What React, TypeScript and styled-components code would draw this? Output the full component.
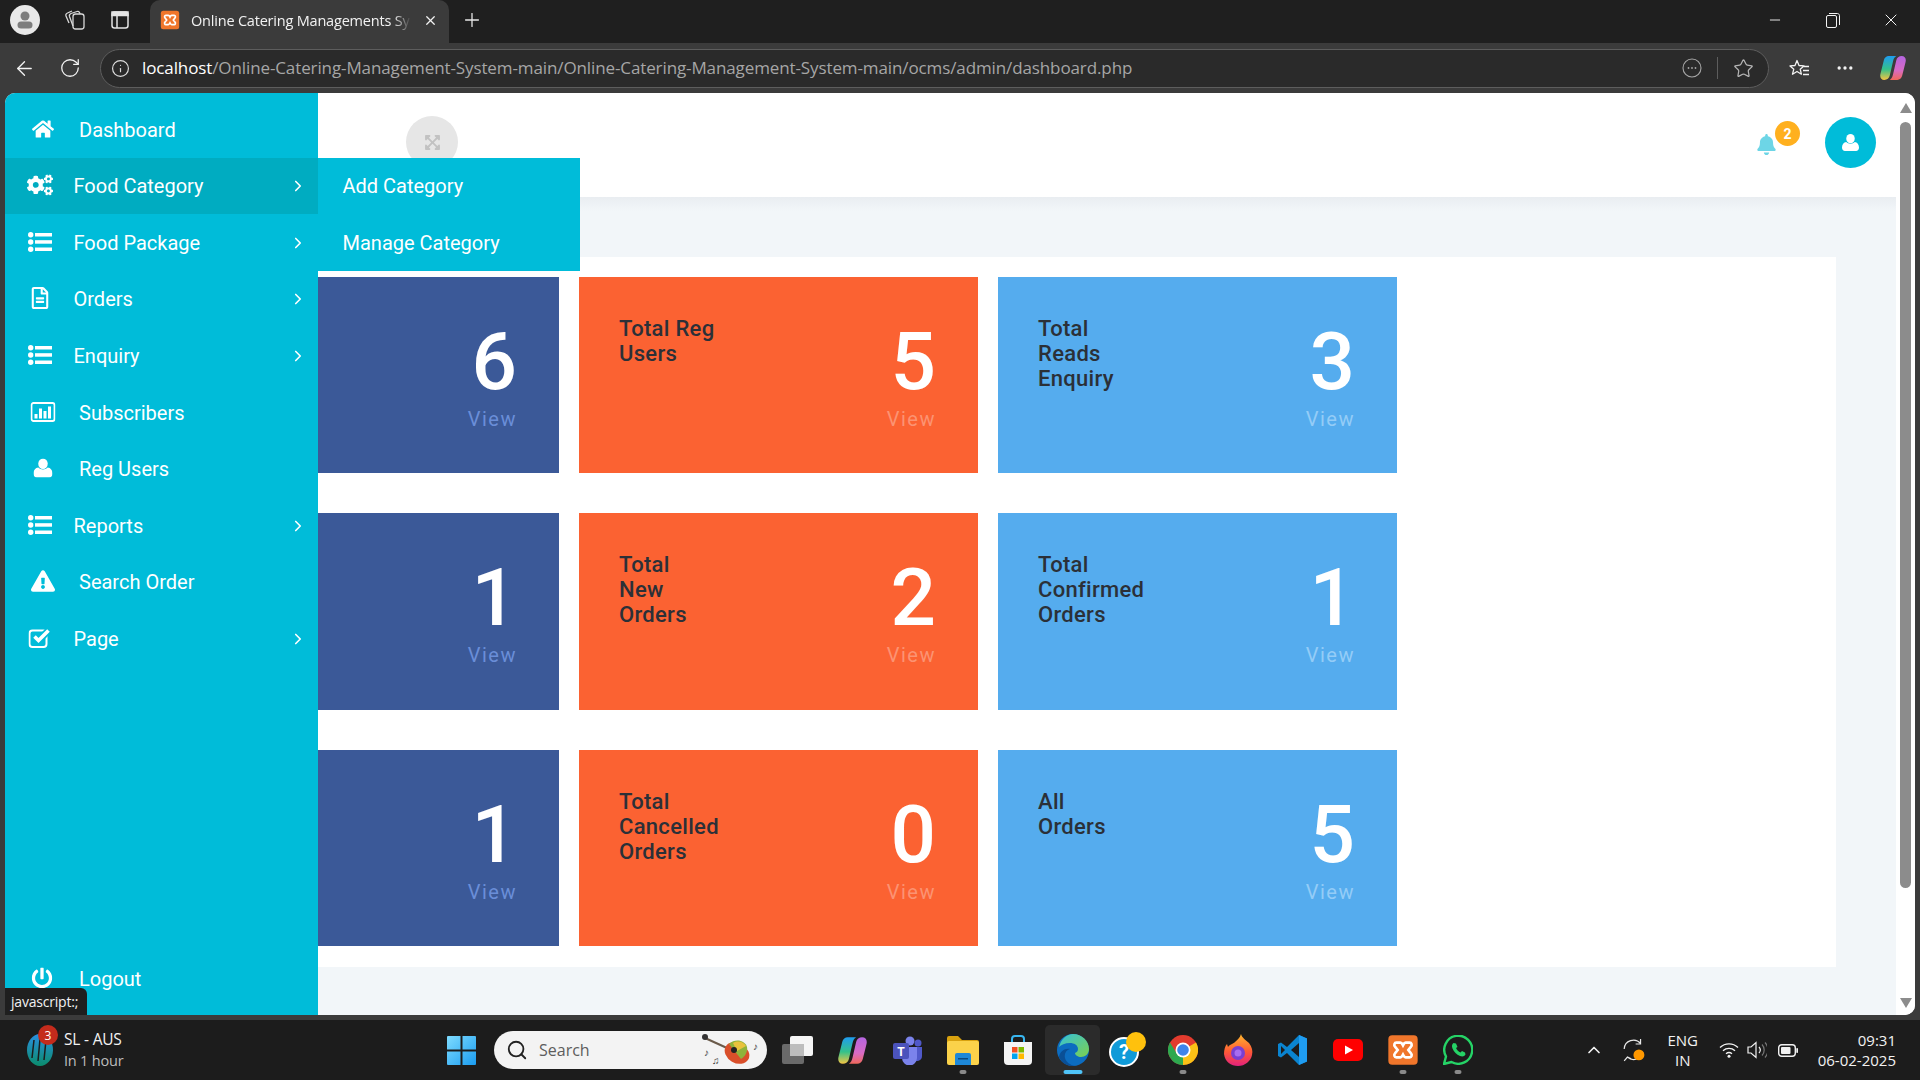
import React from "react"
import styled, {createGlobalStyle} from "styled-components"
import {
  FaBell,
  FaCogs,
  FaExclamationTriangle,
  FaExpandArrowsAlt,
  FaHome,
  FaPowerOff,
  FaRegFileAlt,
} from "react-icons/fa"
import {ChevronRight, ChevronUp, Ellipsis, Info, Minus, Plus, RotateCw, Search, Star, X, ArrowLeft} from "lucide-react"

const GlobalStyle = createGlobalStyle`
  html, body {
    margin: 0;
    padding: 0;
    height: 100%;
    overflow: hidden;
    background: #3b3b3b;
  }
  * {
    box-sizing: border-box;
  }
`

const Screen = styled.div`
  width: 1920px;
  height: 1080px;
  display: flex;
  flex-direction: column;
  background: #3b3b3b;
  font-family: "Open Sans", "Noto Sans", sans-serif;
`

/* browser chrome */

const TabStrip = styled.div`
  height: 43px;
  flex: none;
  padding-bottom: 3px;
  display: flex;
  align-items: center;
  background: #1f1f1f;
  color: #fff;
`

const ChromeSlot = styled.div<{$w: number}>`
  width: ${({$w}) => $w}px;
  flex: none;
  display: flex;
  align-items: center;
  justify-content: center;
`

const CopilotSlot = styled(ChromeSlot)`
  padding-left: 7px;
`

const ProfileDot = styled.div`
  width: 30px;
  height: 30px;
  margin-left: 10px;
  border-radius: 50%;
  background: #e8e8e8;
  display: flex;
  align-items: center;
  justify-content: center;
`

const Tab = styled.div`
  width: 299px;
  height: 43px;
  align-self: flex-start;
  margin-left: 20px;
  padding: 0 0 3px 10px;
  display: flex;
  align-items: center;
  background: #3b3b3b;
  border-radius: 10px 10px 0 0;
`

const TabTitle = styled.div`
  width: 220px;
  flex: none;
  margin-left: 11px;
  white-space: nowrap;
  font-size: 14.5px;
  letter-spacing: -0.2px;
  color: #f2f2f2;
  -webkit-mask-image: linear-gradient(90deg, #000 92%, transparent);
  mask-image: linear-gradient(90deg, #000 92%, transparent);
`

const WindowControls = styled.div`
  margin-left: auto;
  display: flex;
`

const Toolbar = styled.div`
  height: 50px;
  flex: none;
  display: flex;
  align-items: center;
  background: #3b3b3b;
  color: #f2f2f2;
`

const AddressBar = styled.div`
  width: 1669px;
  height: 39px;
  flex: none;
  margin-left: 9px;
  display: flex;
  align-items: center;
  background: #2a2a2a;
  border: 1px solid #5d5d5d;
  border-radius: 20px;
`

const UrlText = styled.div`
  margin: 0 0 2px 3px;
  font-size: 17px;
  letter-spacing: -0.11px;
  white-space: nowrap;
  color: #a6a6a6;
  flex: 1;

  b {
    font-weight: 400;
    color: #fff;
  }
`

const BarDivider = styled.div`
  width: 1px;
  height: 22px;
  background: #5d5d5d;
`

/* the page */

const Page = styled.div`
  position: relative;
  height: 922px;
  flex: none;
  margin: 0 5px;
  display: flex;
  overflow: hidden;
  background: #fff;
  border-radius: 10px 10px 10px 0;
  font-family: Roboto, "Liberation Sans", sans-serif;
`

const Sidebar = styled.nav`
  width: 313px;
  flex: none;
  display: flex;
  flex-direction: column;
  padding: 8.3px 0 7.5px;
  background: #00bcd9;
  color: #fff;
`

const MenuRow = styled.div<{$leaf?: boolean; $active?: boolean; $bottom?: boolean}>`
  height: 56.6px;
  flex: none;
  display: flex;
  align-items: center;
  position: relative;
  padding-left: ${({$leaf}) => ($leaf ? 74 : 68.5)}px;
  margin-top: ${({$bottom}) => ($bottom ? "auto" : 0)};
  background: ${({$active}) => ($active ? "#00acc1" : "transparent")};
  font-size: 20px;
`

const MenuIcon = styled.span<{$x: number}>`
  position: absolute;
  left: ${({$x}) => $x}px;
  top: 50%;
  transform: translate(-50%, -50%);
  display: flex;
  margin-top: -1px;
`

const MenuChevron = styled.span`
  position: absolute;
  left: 293px;
  top: 50%;
  transform: translate(-50%, -50%);
  display: flex;
`

const Submenu = styled.div`
  position: absolute;
  left: 313px;
  top: 65px;
  width: 262px;
  background: #00bcd9;
  color: #fff;
`

const SubmenuRow = styled.div`
  height: 56.5px;
  display: flex;
  align-items: center;
  padding-left: 24.5px;
  font-size: 20px;
`

const Main = styled.div`
  flex: 1;
  min-width: 0;
  display: flex;
  flex-direction: column;
`

const TopBar = styled.header`
  height: 104px;
  flex: none;
  display: flex;
  align-items: center;
  justify-content: space-between;
  padding: 0 20px 6px 88px;
  background: #fff;
`

const ExpandButton = styled.div`
  width: 52px;
  height: 52px;
  border-radius: 50%;
  background: #e6e6e6;
  display: flex;
  align-items: center;
  justify-content: center;
  color: #c2c2c2;
  font-size: 17px;
`

const TopActions = styled.div`
  display: flex;
  align-items: center;
  gap: 48px;
`

const BellWrap = styled.div`
  position: relative;
  display: flex;
  color: #6dd5e6;
  font-size: 21px;
  margin-top: 5px;
`

const BellBadge = styled.span`
  position: absolute;
  left: 19px;
  top: -13px;
  width: 25px;
  height: 25px;
  border-radius: 50%;
  background: #ffb01f;
  color: #fff;
  font-size: 14px;
  font-weight: 700;
  display: flex;
  align-items: center;
  justify-content: center;
`

const Avatar = styled.div`
  width: 51px;
  height: 51px;
  border-radius: 50%;
  background: #00bcd9;
  color: #fff;
  display: flex;
  align-items: center;
  justify-content: center;
`

const Content = styled.main`
  flex: 1;
  padding: 60px 60px 0 0;
  background: linear-gradient(180deg, #e9edf1 0, #f2f6f9 14px);
`

const Card = styled.section`
  height: 710px;
  padding: 20px 0 21px;
  display: grid;
  grid-template-columns: 241px 399px 399px;
  grid-auto-rows: 196.33px;
  column-gap: 20px;
  row-gap: 40px;
  background: #fff;
`

const TILE_COLORS = {
  navy: {bg: "#3b5998", view: "#6a8ed8"},
  orange: {bg: "#fb6232", view: "#fc9372"},
  sky: {bg: "#55acee", view: "#94ccf7"},
}

const Tile = styled.div<{$tone: keyof typeof TILE_COLORS}>`
  display: flex;
  justify-content: space-between;
  padding: 39px 42px 0 40px;
  background: ${({$tone}) => TILE_COLORS[$tone].bg};
`

const TileTitle = styled.div`
  font-size: 22px;
  font-weight: 500;
  line-height: 25px;
  letter-spacing: 0.3px;
  color: #2b3038;
  white-space: pre-line;
`

const TileStat = styled.div`
  margin-left: auto;
  display: flex;
  flex-direction: column;
  align-items: flex-end;
  padding-top: 6px;
`

const TileNumber = styled.div`
  font-size: 80px;
  font-weight: 500;
  line-height: 80px;
  color: #fff;
`

const TileView = styled.div<{$tone: keyof typeof TILE_COLORS}>`
  font-size: 20px;
  line-height: 34px;
  letter-spacing: 1.5px;
  color: ${({$tone}) => TILE_COLORS[$tone].view};
`

const ScrollTrack = styled.div`
  width: 19px;
  flex: none;
  display: flex;
  flex-direction: column;
  align-items: center;
  background: #fff;
  padding: 10px 0 7px;
`

const ScrollArrow = styled.div<{$down?: boolean}>`
  width: 0;
  height: 0;
  flex: none;
  border-left: 6px solid transparent;
  border-right: 6px solid transparent;
  border-${({$down}) => ($down ? "top" : "bottom")}: 10px solid #8c8c8c;
`

const ScrollThumb = styled.div`
  width: 11px;
  height: 766px;
  flex: none;
  margin-top: 9px;
  margin-bottom: auto;
  background: #8c8c8c;
  border-radius: 6px;
`

const StatusTip = styled.div`
  position: absolute;
  left: 0;
  bottom: 0;
  height: 27px;
  width: 82px;
  padding-left: 6px;
  display: flex;
  align-items: center;
  background: #1f1f1f;
  border-radius: 0 6px 0 0;
  color: #f2f2f2;
  font-family: "Open Sans", sans-serif;
  font-size: 14px;
  letter-spacing: -0.2px;
`

/* taskbar */

const Taskbar = styled.footer`
  height: 60px;
  margin-top: 5px;
  flex: none;
  display: flex;
  align-items: center;
  background: #1c1c1c;
  color: #f2f2f2;
  font-size: 14px;
`

const WeatherWidget = styled.div`
  width: 447px;
  flex: none;
  padding-left: 27px;
  display: flex;
  align-items: center;
  gap: 11px;
`

const WidgetIcon = styled.div`
  position: relative;
  display: flex;
`

const WidgetBadge = styled.span`
  position: absolute;
  left: 11px;
  top: -9px;
  width: 20px;
  height: 20px;
  border-radius: 50%;
  background: #c42b1c;
  color: #fff;
  font-size: 12px;
  display: flex;
  align-items: center;
  justify-content: center;
`

const WidgetText = styled.div`
  line-height: 22px;
  font-size: 15.5px;
  letter-spacing: -0.2px;

  small {
    display: block;
    font-size: 14.5px;
    color: #bdbdbd;
  }
`

const SearchBox = styled.div`
  width: 273px;
  height: 38px;
  margin-left: 18px;
  padding: 0 4px 0 12px;
  flex: none;
  display: flex;
  align-items: center;
  gap: 11px;
  background: #f3f3f3;
  border-radius: 19px;
  color: #5d5d5d;
  font-size: 16px;
`

const SearchDecor = styled.span`
  margin-left: auto;
  display: flex;
`

const AppRow = styled.div`
  display: flex;
  margin-left: 3px;
`

const AppSlot = styled.div<{$active?: boolean}>`
  position: relative;
  width: 55px;
  height: 50px;
  display: flex;
  align-items: center;
  justify-content: center;
  background: ${({$active}) => ($active ? "#2b2b2b" : "transparent")};
  border-radius: 5px;
`

const RunDot = styled.span<{$active?: boolean}>`
  position: absolute;
  bottom: 1px;
  left: 50%;
  transform: translateX(-50%);
  width: ${({$active}) => ($active ? 19 : 7)}px;
  height: 4px;
  border-radius: 2px;
  background: ${({$active}) => ($active ? "#4fc3f7" : "#8a8a8a")};
`

const Tray = styled.div`
  margin-left: auto;
  padding-right: 24px;
  display: flex;
  align-items: center;
`

const TrayItem = styled.div<{$w: number}>`
  width: ${({$w}) => $w}px;
  flex: none;
  display: flex;
  align-items: center;
  justify-content: center;
`

const TrayLang = styled(TrayItem)`
  flex-direction: column;
  font-size: 15px;
  line-height: 20px;
`

const Clock = styled.div`
  margin-left: 12px;
  text-align: right;
  font-size: 15px;
  line-height: 20px;
`

/* drawings */

const XamppLogo = ({size}: {size: number}) => (
  <svg width={size} height={size} viewBox="0 0 24 24">
    <rect x="1" y="1" width="22" height="22" rx="3" fill="#f0762b" />
    <path
      d="M7 6.500h3c1 0 1.500 1 2 2 .5-1 1-2 2-2h3c1.500 0 2 2 1 3l-2 2.500 2 2.500c1 1 .5 3-1 3h-3c-1 0-1.500-1-2-2-.5 1-1 2-2 2H7c-1.500 0-2-2-1-3l2-2.500-2-2.500c-1-1-.5-3 1-3z"
      fill="none"
      stroke="#fff"
      strokeWidth="2"
    />
  </svg>
)

const CopilotLogo = ({size}: {size: number}) => (
  <svg width={size} height={size} viewBox="0 0 24 24">
    <defs>
      <linearGradient id="cpA" x1="0" y1="0" x2="0" y2="1">
        <stop offset="0" stopColor="#1f9cf0" />
        <stop offset="0.55" stopColor="#35c28a" />
        <stop offset="1" stopColor="#f5c542" />
      </linearGradient>
      <linearGradient id="cpB" x1="0" y1="0" x2="0" y2="1">
        <stop offset="0" stopColor="#b565e0" />
        <stop offset="0.6" stopColor="#d86bc4" />
        <stop offset="1" stopColor="#f0685a" />
      </linearGradient>
    </defs>
    <path d="M16 23H9c1.500-1 2.500-2.500 3-5l3-13c.5-2.500 2.500-4 5-4 3 0 4.500 2.500 3.500 6l-3 12c-.5 2.500-2.500 4-4.500 4z" fill="url(#cpB)" />
    <path d="M8 1h7c-1.500 1-2.500 2.500-3 5l-3 13c-.5 2.500-2.500 4-5 4-3 0-4.500-2.500-3.500-6L3.500 5C4 2.500 6 1 8 1z" fill="url(#cpA)" />
  </svg>
)

const ProfileIcon = () => (
  <svg width="22" height="22" viewBox="0 0 22 22" fill="#7d7d7d">
    <circle cx="11" cy="7" r="4.500" />
    <rect x="3.500" y="12.500" width="15" height="7" rx="3.500" />
  </svg>
)

const WorkspacesIcon = () => (
  <svg width="22" height="24" viewBox="0 0 22 24" fill="none" stroke="#d8d8d8" strokeWidth="1.300">
    <rect x="9" y="6" width="11" height="15" rx="2.500" />
    <path d="M9 18 5.500 8.500c-.4-1.300.3-2.500 1.500-3l6-2c1-.3 2 .2 2.500 1l.7 1.500" />
    <path d="M5 15 2 8c-.4-1.300.2-2.500 1.500-3L8 3" />
  </svg>
)

const TabsIcon = () => (
  <svg width="20" height="20" viewBox="0 0 20 20" fill="none" stroke="#e4e4e4" strokeWidth="1.500">
    <rect x="2" y="2" width="16" height="16" rx="2.500" />
    <path d="M7 5.500V18" />
    <rect x="2" y="2" width="16" height="3.500" fill="#e4e4e4" />
  </svg>
)

const RestoreIcon = () => (
  <svg width="14" height="15" viewBox="0 0 14 15" fill="none" stroke="#f2f2f2">
    <rect x="0.500" y="2.500" width="10" height="12" rx="1.500" />
    <path d="M3 .5h8.500c1 0 2 1 2 2V12" />
  </svg>
)

const PageMenuIcon = () => (
  <svg width="20" height="20" viewBox="0 0 20 20" fill="none" stroke="#a6a6a6" strokeWidth="1.100">
    <circle cx="10" cy="10" r="9" />
    <circle cx="6.500" cy="10" r="0.900" fill="#a6a6a6" stroke="none" />
    <circle cx="10" cy="10" r="0.900" fill="#a6a6a6" stroke="none" />
    <circle cx="13.500" cy="10" r="0.900" fill="#a6a6a6" stroke="none" />
  </svg>
)

const FavoritesIcon = () => (
  <svg width="22" height="22" viewBox="0 0 22 22" fill="none" stroke="#f2f2f2" strokeWidth="1.300">
    <path d="M9 2.500 11 7.500l5 .4-3.800 3.300 1.200 5L9 13.500l-4.500 2.700 1.300-5L2 7.900l5-.4z" strokeLinejoin="round" transform="translate(-1 1)" />
    <path d="M15 9.500h5M14 13.500h6M14 17.500h6" />
  </svg>
)

const ListIcon = () => (
  <svg width="24" height="20" viewBox="0 0 24 20" fill="currentColor">
    <circle cx="2.700" cy="2.700" r="2.700" />
    <circle cx="2.700" cy="10" r="2.700" />
    <circle cx="2.700" cy="17.300" r="2.700" />
    <rect x="7" y="1" width="17" height="3.500" />
    <rect x="7" y="8.200" width="17" height="3.500" />
    <rect x="7" y="15.500" width="17" height="3.500" />
  </svg>
)

const UserIcon = ({size}: {size: number}) => (
  <svg width={size} height={size} viewBox="0 0 20 20" fill="currentColor">
    <ellipse cx="10" cy="5.500" rx="5" ry="5.500" />
    <path d="M5 9.500c1.300 1.300 3 2 5 2s3.700-.7 5-2c3 .3 5 3 5 6.500 0 2.500-1.500 4-3.500 4h-13C1.500 20 0 18.500 0 16c0-3.500 2-6.200 5-6.500z" />
  </svg>
)

const CheckBoxIcon = () => (
  <svg width="23" height="20" viewBox="0 0 23 20">
    <rect x="1" y="2.500" width="17" height="16.500" rx="3" fill="none" stroke="currentColor" strokeWidth="2" />
    <path d="M6 8.500l4 4L20 2.500" fill="none" stroke="#00bcd9" strokeWidth="7" />
    <path d="M6 8.500l4 4L20 2.500" fill="none" stroke="currentColor" strokeWidth="3.600" />
  </svg>
)

const BarChartBoxIcon = () => (
  <svg width="25" height="20" viewBox="0 0 25 20" fill="currentColor">
    <rect x="1" y="1" width="23" height="18" rx="2" fill="none" stroke="currentColor" strokeWidth="1.800" />
    <rect x="4" y="12" width="3" height="4.500" />
    <rect x="8.500" y="6.500" width="3" height="10" />
    <rect x="13" y="9" width="3" height="7.500" />
    <rect x="17.500" y="4.500" width="3" height="12" />
  </svg>
)

const WindowsLogo = () => (
  <svg width="29" height="29" viewBox="0 0 29 29">
    <defs>
      <linearGradient id="winG" x1="0" y1="0" x2="1" y2="1">
        <stop offset="0" stopColor="#7fdcff" />
        <stop offset="1" stopColor="#1a9cf0" />
      </linearGradient>
    </defs>
    <path d="M1 0h12.500v13.500H0V1a1 1 0 0 1 1-1zM15.500 0H28a1 1 0 0 1 1 1v12.500H15.500zM0 15.500h13.500V29H1a1 1 0 0 1-1-1zM15.500 15.500H29V28a1 1 0 0 1-1 1H15.500z" fill="url(#winG)" />
  </svg>
)

const IccLogo = () => (
  <svg width="26" height="32" viewBox="0 0 26 32">
    <defs>
      <linearGradient id="iccG" x1="0" y1="0" x2="0" y2="1">
        <stop offset="0" stopColor="#2a8fe0" />
        <stop offset="1" stopColor="#0b8c6c" />
      </linearGradient>
    </defs>
    <ellipse cx="13" cy="16" rx="13" ry="16" fill="url(#iccG)" />
    <path d="M7 6 5 24M13 5l-2 22M19 6l-2 20" stroke="#1c1c1c" strokeWidth="1.500" />
  </svg>
)

const GuitarDecor = () => (
  <svg width="62" height="36" viewBox="0 0 62 36">
    <path d="M4 6 26 16" stroke="#6a5a4a" strokeWidth="2" />
    <circle cx="4" cy="5" r="3" fill="#333" />
    <ellipse cx="36" cy="21" rx="13" ry="10" fill="#d94f2a" transform="rotate(30 36 21)" />
    <path d="M28 12c6-6 16-4 18 3 1 4-2 10-6 12z" fill="#8fb33a" />
    <path d="M32 11c5-3 11-1 13 3l-9 5z" fill="#e9c23c" />
    <circle cx="33" cy="18" r="3" fill="#222" />
    <text x="3" y="24" fontSize="10" fill="#333">♪</text>
    <text x="11" y="32" fontSize="10" fill="#333">♫</text>
    <text x="52" y="18" fontSize="10" fill="#333">♪</text>
  </svg>
)

const TaskViewIcon = () => (
  <svg width="32" height="32" viewBox="0 0 32 32">
    <rect x="0" y="10" width="22" height="20" rx="2" fill="#6a6a6a" />
    <rect x="8" y="2" width="23" height="20" rx="2" fill="#f5f5f5" />
    <rect x="8" y="10" width="14" height="12" fill="#bdbdbd" />
  </svg>
)

const TeamsIcon = () => (
  <svg width="30" height="30" viewBox="0 0 30 30">
    <circle cx="17" cy="6" r="4.500" fill="#7b83eb" />
    <circle cx="25" cy="8" r="3.500" fill="#5059c9" />
    <path d="M20 12h9v9a5 5 0 0 1-9 3z" fill="#5059c9" />
    <path d="M9 12h15v11a7 7 0 0 1-15 0z" fill="#7b83eb" />
    <rect x="0" y="8" width="16" height="16" rx="2" fill="#4b53bc" />
    <text x="8" y="21" textAnchor="middle" fontSize="12" fontWeight="700" fill="#fff" fontFamily="Roboto">T</text>
  </svg>
)

const FolderIcon = () => (
  <svg width="32" height="30" viewBox="0 0 32 30">
    <path d="M0 3a2 2 0 0 1 2-2h9l4 4h15a2 2 0 0 1 2 2v3H0z" fill="#d9a20f" />
    <rect x="0" y="6" width="32" height="24" rx="2" fill="#fbd24a" />
    <path d="M8 20a2 2 0 0 1 2-2h12a2 2 0 0 1 2 2v10H8z" fill="#1e88d8" />
    <rect x="11" y="23" width="10" height="1.500" fill="#0b4a80" />
  </svg>
)

const StoreIcon = () => (
  <svg width="30" height="30" viewBox="0 0 30 30">
    <path d="M9 7V4a3 3 0 0 1 3-3h6a3 3 0 0 1 3 3v3" fill="none" stroke="#38b6f0" strokeWidth="2" />
    <path d="M1 7h28v19a4 4 0 0 1-4 4H5a4 4 0 0 1-4-4z" fill="#f4f4f4" />
    <rect x="9" y="12" width="5.500" height="5.500" fill="#f25022" />
    <rect x="15.500" y="12" width="5.500" height="5.500" fill="#7fba00" />
    <rect x="9" y="18.500" width="5.500" height="5.500" fill="#00a4ef" />
    <rect x="15.500" y="18.500" width="5.500" height="5.500" fill="#ffb900" />
  </svg>
)

const EdgeIcon = () => (
  <svg width="32" height="32" viewBox="0 0 32 32">
    <defs>
      <linearGradient id="edgeG" x1="0" y1="0" x2="1" y2="1">
        <stop offset="0" stopColor="#35c1d8" />
        <stop offset="1" stopColor="#7cd04f" />
      </linearGradient>
    </defs>
    <circle cx="16" cy="16" r="16" fill="#0c6cc0" />
    <path d="M2 13C4 5 10 0 16 0c9 0 16 7 16 15 0 5-4 8-8 8-3 0-6-2-6-4 2-1 3-2 3-4 0-4-4-6-8-6-5 0-9 2-11 4z" fill="url(#edgeG)" />
    <path d="M13 15c-4 1-6 5-5 9 1 4 5 7 10 8-6 1-13-2-16-9 1-6 6-9 11-8z" fill="#0a4f96" />
  </svg>
)

const HelpIcon = () => (
  <svg width="38" height="36" viewBox="0 0 38 36">
    <circle cx="15" cy="20" r="14" fill="#0f9ad8" stroke="#fff" strokeWidth="2" />
    <text x="15" y="27" textAnchor="middle" fontSize="20" fontWeight="700" fill="#fff" fontFamily="Roboto">?</text>
    <ellipse cx="27" cy="10" rx="10" ry="10" fill="#ffc10d" />
  </svg>
)

const ChromeIcon = () => (
  <svg width="30" height="30" viewBox="0 0 30 30">
    <circle cx="15" cy="15" r="15" fill="#e33b2e" />
    <path d="M15 15 2 22.500A15 15 0 0 0 15 30z" fill="#2da94f" />
    <path d="M15 15 15 30A15 15 0 0 0 28 7.500z" fill="#fbc116" />
    <path d="M2 7.500 9 19 2 22.500A15 15 0 0 1 2 7.500z" fill="#2da94f" />
    <circle cx="15" cy="15" r="7.500" fill="#fff" />
    <circle cx="15" cy="15" r="5.800" fill="#3f84ea" />
  </svg>
)

const FirefoxIcon = () => (
  <svg width="30" height="32" viewBox="0 0 30 32">
    <defs>
      <linearGradient id="ffG" x1="0.500" y1="0" x2="0.500" y2="1">
        <stop offset="0" stopColor="#ffb72d" />
        <stop offset="0.55" stopColor="#ff5a36" />
        <stop offset="1" stopColor="#e3217c" />
      </linearGradient>
    </defs>
    <path d="M18 0c1 4 5 6 8 9 3 4 4 8 3 12-1 6-7 11-14 11S2 28 1 20c0-4 1-8 3-10l1 3c2-3 5-3 7-5 2-2 5-4 6-8z" fill="url(#ffG)" />
    <circle cx="15" cy="19" r="7" fill="#7a3fd1" />
    <circle cx="15" cy="19" r="3.500" fill="#a76cf0" />
  </svg>
)

const VsCodeIcon = () => (
  <svg width="30" height="30" viewBox="0 0 30 30">
    <path d="M21 0 9 12 3 7.500 0 9v12l3 1.500L9 18l12 12 8-3.500V3.500zM21 8v14l-8-7zM3 11l4 4-4 4z" fill="#0a84d0" />
    <path d="M21 0l8 3.500v23L21 30z" fill="#1f9cf0" />
  </svg>
)

const YoutubeIcon = () => (
  <svg width="30" height="22" viewBox="0 0 30 22">
    <rect width="30" height="22" rx="5" fill="#f00" />
    <path d="M12 6.500 20 11l-8 4.500z" fill="#fff" />
  </svg>
)

const WhatsappIcon = () => (
  <svg width="30" height="30" viewBox="0 0 30 30">
    <path d="M1 29l2-7.500A14 14 0 1 1 8.500 27z" fill="none" stroke="#25d366" strokeWidth="2.400" strokeLinejoin="round" />
    <path d="M10.500 8c-1.500 1-2 3-1 5.500 1.500 3.500 4 6 7.500 7.500 2.500 1 4.500.3 5.500-1.500l-.5-2-3-1.500-1.500 1.500c-2-.8-3.500-2.300-4.500-4.500L14.500 12 13 8.500z" fill="#25d366" />
  </svg>
)

const SyncIcon = () => (
  <svg width="24" height="24" viewBox="0 0 22 22" fill="none" stroke="#e8e8e8" strokeWidth="1.100">
    <path d="M2 10A8.500 8.500 0 0 1 17 5M17 1v4.500h-4.500M19 13a8.500 8.500 0 0 1-14 4.500M2 21l3-3.500L8.500 19" />
    <circle cx="15.500" cy="15.500" r="5" fill="#ff9800" stroke="none" />
  </svg>
)

const WifiIcon = () => (
  <svg width="20" height="16" viewBox="0 0 20 16" fill="none" stroke="#f2f2f2" strokeWidth="1.400">
    <path d="M1 5.500a13 13 0 0 1 18 0M4 8.700a9 9 0 0 1 12 0M7 11.700a5 5 0 0 1 6 0" />
    <circle cx="10" cy="14.300" r="1.500" fill="#f2f2f2" stroke="none" />
  </svg>
)

const VolumeIcon = () => (
  <svg width="20" height="18" viewBox="0 0 20 18" fill="none" stroke="#f2f2f2" strokeWidth="1.200">
    <path d="M1 6h3l5-4.500v15L4 12H1z" />
    <path d="M12 6a4.500 4.500 0 0 1 0 6" />
    <path d="M15 3.500a8 8 0 0 1 0 11M18 1.500a11 11 0 0 1 0 15" stroke="#777" />
  </svg>
)

const BatteryIcon = () => (
  <svg width="20" height="13" viewBox="0 0 20 13">
    <rect x="0.700" y="0.700" width="16.600" height="11.600" rx="3" fill="none" stroke="#f2f2f2" strokeWidth="1.400" />
    <rect x="3" y="3" width="9.500" height="7" rx="1" fill="#f2f2f2" />
    <rect x="18.300" y="4" width="1.700" height="5" rx="0.800" fill="#f2f2f2" />
  </svg>
)

/* data */

const MENU_ITEMS = [
  {label: "Dashboard", icon: <FaHome size={22} />, leaf: true},
  {label: "Food Category", icon: <FaCogs size={26} />, active: true},
  {label: "Food Package", icon: <ListIcon />},
  {label: "Orders", icon: <FaRegFileAlt size={22} />},
  {label: "Enquiry", icon: <ListIcon />},
  {label: "Subscribers", icon: <BarChartBoxIcon />, leaf: true},
  {label: "Reg Users", icon: <UserIcon size={19} />, leaf: true},
  {label: "Reports", icon: <ListIcon />},
  {label: "Search Order", icon: <FaExclamationTriangle size={24} />, leaf: true},
  {label: "Page", icon: <CheckBoxIcon />},
]

const TILES: {tone: keyof typeof TILE_COLORS; title: string; value: number}[] = [
  {tone: "navy", title: "", value: 6},
  {tone: "orange", title: "Total Reg\nUsers", value: 5},
  {tone: "sky", title: "Total\nReads\nEnquiry", value: 3},
  {tone: "navy", title: "", value: 1},
  {tone: "orange", title: "Total\nNew\nOrders", value: 2},
  {tone: "sky", title: "Total\nConfirmed\nOrders", value: 1},
  {tone: "navy", title: "", value: 1},
  {tone: "orange", title: "Total\nCancelled\nOrders", value: 0},
  {tone: "sky", title: "All\nOrders", value: 5},
]

const TASKBAR_APPS = [
  {key: "view", icon: <TaskViewIcon />},
  {key: "copilot", icon: <CopilotLogo size={29} />},
  {key: "teams", icon: <TeamsIcon />},
  {key: "files", icon: <FolderIcon />, running: true},
  {key: "store", icon: <StoreIcon />},
  {key: "edge", icon: <EdgeIcon />, running: true, active: true},
  {key: "help", icon: <HelpIcon />},
  {key: "chrome", icon: <ChromeIcon />, running: true},
  {key: "firefox", icon: <FirefoxIcon />},
  {key: "vscode", icon: <VsCodeIcon />},
  {key: "youtube", icon: <YoutubeIcon />},
  {key: "xampp", icon: <XamppLogo size={32} />, running: true},
  {key: "whatsapp", icon: <WhatsappIcon />, running: true},
]

export default function App() {
  return (
    <Screen>
      <GlobalStyle />
      <TabStrip>
        <ProfileDot>
          <ProfileIcon />
        </ProfileDot>
        <ChromeSlot $w={70}>
          <WorkspacesIcon />
        </ChromeSlot>
        <ChromeSlot $w={20}>
          <TabsIcon />
        </ChromeSlot>
        <Tab>
          <XamppLogo size={20} />
          <TabTitle>Online Catering Managements Sy</TabTitle>
          <ChromeSlot $w={38}>
            <X size={15} color="#f2f2f2" />
          </ChromeSlot>
        </Tab>
        <ChromeSlot $w={46}>
          <Plus size={22} color="#e8e8e8" strokeWidth={1.4} />
        </ChromeSlot>
        <WindowControls>
          <ChromeSlot $w={58}>
            <Minus size={16} color="#f2f2f2" strokeWidth={1.4} />
          </ChromeSlot>
          <ChromeSlot $w={58}>
            <RestoreIcon />
          </ChromeSlot>
          <ChromeSlot $w={58}>
            <X size={20} color="#f2f2f2" strokeWidth={1.2} />
          </ChromeSlot>
        </WindowControls>
      </TabStrip>

      <Toolbar>
        <ChromeSlot $w={49}>
          <ArrowLeft size={23} strokeWidth={1.4} />
        </ChromeSlot>
        <ChromeSlot $w={42}>
          <RotateCw size={22} strokeWidth={1.4} />
        </ChromeSlot>
        <AddressBar>
          <ChromeSlot $w={38}>
            <Info size={19} color="#dcdcdc" strokeWidth={1.5} />
          </ChromeSlot>
          <UrlText>
            <b>localhost</b>/Online-Catering-Management-System-main/Online-Catering-Management-System-main/ocms/admin/dashboard.php
          </UrlText>
          <ChromeSlot $w={24}>
            <PageMenuIcon />
          </ChromeSlot>
          <ChromeSlot $w={26}>
            <BarDivider />
          </ChromeSlot>
          <ChromeSlot $w={26}>
            <Star size={21} color="#b5b5b5" strokeWidth={1.4} />
          </ChromeSlot>
          <ChromeSlot $w={12} />
        </AddressBar>
        <ChromeSlot $w={62}>
          <FavoritesIcon />
        </ChromeSlot>
        <ChromeSlot $w={28}>
          <Ellipsis size={20} strokeWidth={2} />
        </ChromeSlot>
        <CopilotSlot $w={61}>
          <CopilotLogo size={26} />
        </CopilotSlot>
      </Toolbar>

      <Page>
        <Sidebar>
          {MENU_ITEMS.map((item) => (
            <MenuRow key={item.label} $leaf={item.leaf} $active={item.active}>
              <MenuIcon $x={item.leaf ? 38 : 35}>{item.icon}</MenuIcon>
              {item.label}
              {!item.leaf && (
                <MenuChevron>
                  <ChevronRight size={18} strokeWidth={2.2} />
                </MenuChevron>
              )}
            </MenuRow>
          ))}
          <MenuRow $leaf $bottom>
            <MenuIcon $x={37}>
              <FaPowerOff size={21} />
            </MenuIcon>
            Logout
          </MenuRow>
        </Sidebar>

        <Main>
          <TopBar>
            <ExpandButton>
              <FaExpandArrowsAlt />
            </ExpandButton>
            <TopActions>
              <BellWrap>
                <FaBell />
                <BellBadge>2</BellBadge>
              </BellWrap>
              <Avatar>
                <UserIcon size={17} />
              </Avatar>
            </TopActions>
          </TopBar>
          <Content>
            <Card>
              {TILES.map((tile, index) => (
                <Tile key={index} $tone={tile.tone}>
                  <TileTitle>{tile.title}</TileTitle>
                  <TileStat>
                    <TileNumber>{tile.value}</TileNumber>
                    <TileView $tone={tile.tone}>View</TileView>
                  </TileStat>
                </Tile>
              ))}
            </Card>
          </Content>
        </Main>

        <ScrollTrack>
          <ScrollArrow />
          <ScrollThumb />
          <ScrollArrow $down />
        </ScrollTrack>

        <Submenu>
          <SubmenuRow>Add Category</SubmenuRow>
          <SubmenuRow>Manage Category</SubmenuRow>
        </Submenu>

        <StatusTip>javascript:;</StatusTip>
      </Page>

      <Taskbar>
        <WeatherWidget>
          <WidgetIcon>
            <IccLogo />
            <WidgetBadge>3</WidgetBadge>
          </WidgetIcon>
          <WidgetText>
            SL - AUS
            <small>In 1 hour</small>
          </WidgetText>
        </WeatherWidget>
        <WindowsLogo />
        <SearchBox>
          <Search size={22} color="#222" strokeWidth={2} />
          Search
          <SearchDecor>
            <GuitarDecor />
          </SearchDecor>
        </SearchBox>
        <AppRow>
          {TASKBAR_APPS.map((app) => (
            <AppSlot key={app.key} $active={app.active}>
              {app.icon}
              {app.running && <RunDot $active={app.active} />}
            </AppSlot>
          ))}
        </AppRow>
        <Tray>
          <TrayItem $w={44}>
            <ChevronUp size={20} strokeWidth={2} />
          </TrayItem>
          <TrayItem $w={36}>
            <SyncIcon />
          </TrayItem>
          <TrayLang $w={62}>
            <span>ENG</span>
            <span>IN</span>
          </TrayLang>
          <TrayItem $w={30}>
            <WifiIcon />
          </TrayItem>
          <TrayItem $w={26}>
            <VolumeIcon />
          </TrayItem>
          <TrayItem $w={36}>
            <BatteryIcon />
          </TrayItem>
          <Clock>
            09:31
            <br />
            06-02-2025
          </Clock>
        </Tray>
      </Taskbar>
    </Screen>
  )
}
